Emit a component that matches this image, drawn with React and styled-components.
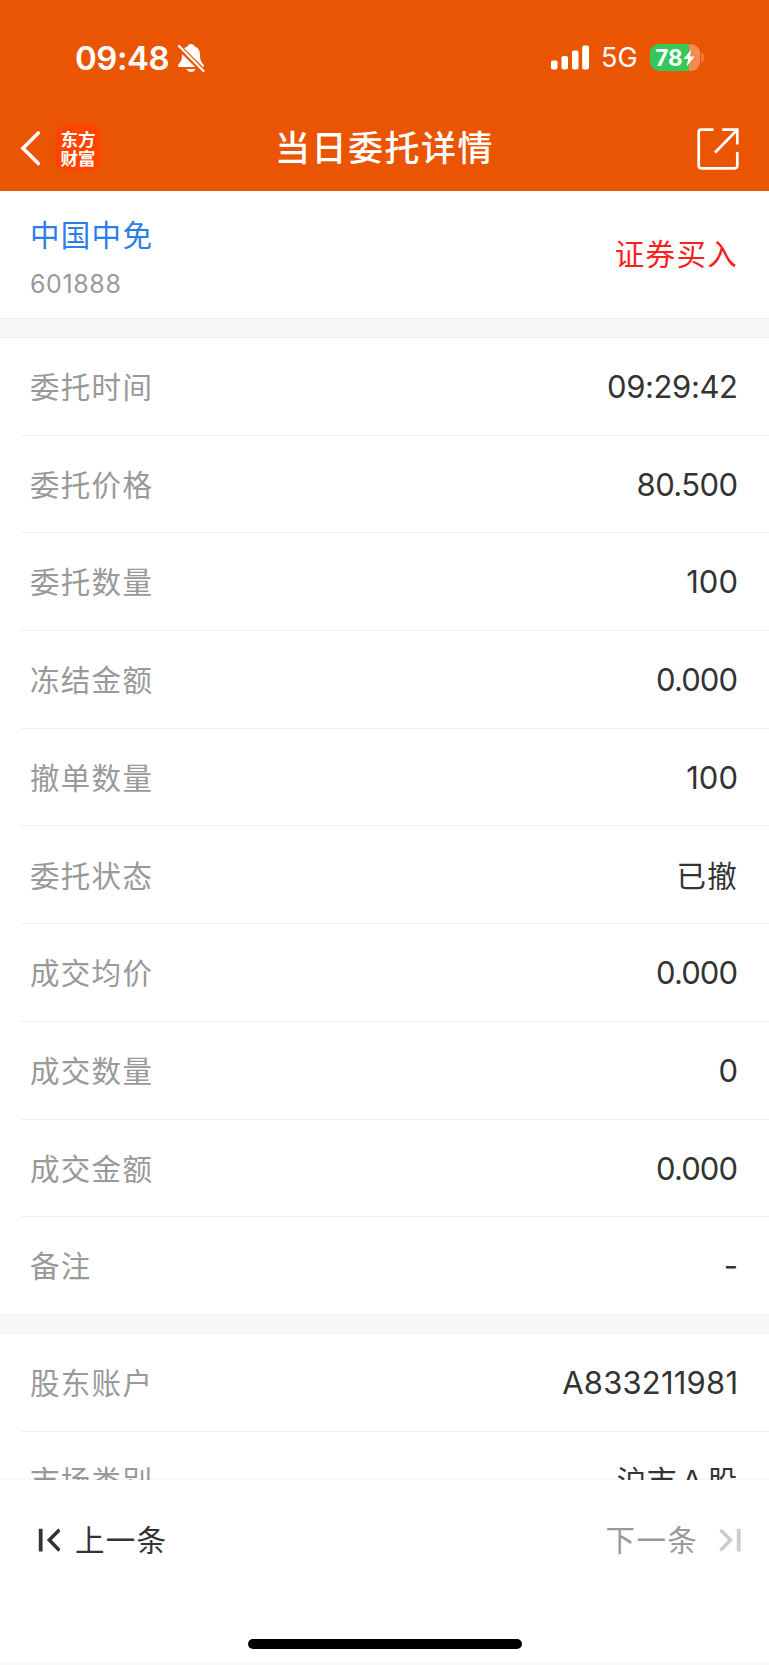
import React from "react";
import styled, { createGlobalStyle } from "styled-components";

const GlobalStyle = createGlobalStyle`
  * {
    box-sizing: border-box;
  }

  body {
    margin: 0;
    background-color: #fff;
    font-family: Inter, "Noto Sans CJK SC", sans-serif;
  }
`;

const Page = styled.div`
  display: flex;
  flex-direction: column;
  width: 769px;
  height: 1665px;
  overflow: hidden;
  background-color: #fff;
`;

const Header = styled.header`
  flex: none;
  height: 191px;
  background-color: #ea5504;
  color: #fff;
`;

const StatusBar = styled.div`
  display: flex;
  align-items: center;
  justify-content: space-between;
  height: 103px;
  padding: 12px 65px 0 75px;
`;

const StatusGroup = styled.div`
  display: flex;
  align-items: center;
`;

const Time = styled.span`
  width: 102px;
  font-size: 33px;
  font-weight: 600;
  line-height: 40px;
  letter-spacing: -0.5px;
`;

const Network = styled.span`
  width: 49px;
  margin-left: 12px;
  font-size: 27px;
  line-height: 40px;
`;

const Battery = styled.div`
  display: flex;
  align-items: center;
  justify-content: center;
  width: 50px;
  height: 27px;
  border-radius: 9px;
  background: linear-gradient(to right, #34c759 39px, #f38c54 39px);
  font-size: 22.5px;
  font-weight: 700;
  line-height: 27px;
`;

const BatteryCap = styled.div`
  width: 3px;
  height: 9px;
  margin-left: 1px;
  border-radius: 0 4px 4px 0;
  background-color: #f07a3c;
`;

const NavBar = styled.div`
  display: grid;
  grid-template-columns: 200px 1fr 200px;
  align-items: center;
  height: 88px;
  padding: 2px 30px 0 20px;
`;

const NavLeft = styled.div`
  display: flex;
  align-items: center;
  gap: 13px;
`;

const NavRight = styled.div`
  display: flex;
  justify-content: flex-end;
  padding-top: 2px;
`;

const AppLogo = styled.div`
  display: flex;
  align-items: center;
  justify-content: center;
  width: 46px;
  height: 46px;
  border-radius: 10px;
  background-color: #ff4400;
  font-family: "Noto Sans CJK SC", sans-serif;
  font-size: 17.5px;
  font-weight: 700;
  line-height: 19px;
  white-space: pre-line;
`;

const Title = styled.h1`
  margin: 0;
  padding-left: 10px;
  text-align: center;
  font-size: 35px;
  font-weight: 500;
  line-height: 50px;
  letter-spacing: 1.5px;
  white-space: nowrap;
`;

const Stock = styled.section`
  display: flex;
  flex: none;
  align-items: center;
  justify-content: space-between;
  height: 127px;
  padding: 0 31px 0 30px;
`;

const StockInfo = styled.div`
  padding-top: 7px;
`;

const StockName = styled.div`
  color: #2b7de9;
  font-size: 29.5px;
  line-height: 44px;
  letter-spacing: 1.3px;
`;

const StockCode = styled.div`
  margin-top: 7px;
  color: #999;
  font-size: 25px;
  line-height: 40px;
  letter-spacing: 0.6px;
`;

const Direction = styled.div`
  padding-bottom: 2px;
  color: #f6211f;
  font-size: 29.5px;
  line-height: 44px;
  letter-spacing: 1.3px;
`;

const Divider = styled.div`
  flex: none;
  height: 20px;
  border-top: 1px solid #eeeeef;
  border-bottom: 1px solid #eeeeef;
  background-color: #f6f7f9;
`;

const List = styled.section`
  flex: none;
  height: ${({ $height }) => $height}px;
  padding-left: 20px;
  overflow: hidden;
`;

const Row = styled.div`
  display: flex;
  align-items: center;
  justify-content: space-between;
  height: 97.7px;
  padding: 1.5px 31px 0 10px;
  border-bottom: 1px solid ${({ $last }) => ($last ? "transparent" : "#f2f2f3")};
`;

const Label = styled.span`
  color: #999;
  font-size: 29.5px;
  line-height: 44px;
  letter-spacing: 1.3px;
`;

const Value = styled.span`
  margin-right: ${({ $spacing = 0 }) => -$spacing}px;
  color: #333;
  font-size: 31px;
  line-height: 44px;
  letter-spacing: ${({ $spacing = 0 }) => $spacing}px;
`;

const TextValue = styled(Value)`
  margin-right: 0;
  font-size: 29.5px;
  letter-spacing: ${({ $spacing = 1.2 }) => $spacing}px;
`;

/* the see-through top border lets the clipped row show under it */
const Footer = styled.footer`
  display: flex;
  flex: 1;
  flex-direction: column;
  align-items: center;
  justify-content: space-between;
  margin-top: -2px;
  border-top: 2px solid rgba(0, 0, 0, 0.03);
  border-bottom: 3px solid #f8f8f9;
  background-color: #fff;
  background-clip: padding-box;
`;

const Pager = styled.div`
  display: flex;
  justify-content: space-between;
  width: 100%;
  padding: 38px 27px 0 36px;
`;

const PagerButton = styled.div`
  display: flex;
  align-items: center;
  gap: ${({ $gap }) => $gap}px;
  color: ${({ $disabled }) => ($disabled ? "#999" : "#333")};
  font-size: 29.5px;
  line-height: 44px;
  letter-spacing: 1.3px;
`;

const HomeIndicator = styled.div`
  width: 274px;
  height: 10px;
  margin-bottom: 13px;
  border-radius: 5px;
  background-color: #000;
`;

const orderRows = [
  { label: "委托时间", value: "09:29:42", spacing: -0.4 },
  { label: "委托价格", value: "80.500", spacing: -0.6 },
  { label: "委托数量", value: "100" },
  { label: "冻结金额", value: "0.000", spacing: -0.9 },
  { label: "撤单数量", value: "100" },
  { label: "委托状态", value: "已撤", text: true },
  { label: "成交均价", value: "0.000", spacing: -0.9 },
  { label: "成交数量", value: "0" },
  { label: "成交金额", value: "0.000", spacing: -0.9 },
  { label: "备注", value: "-" },
];

const accountRows = [
  { label: "股东账户", value: "A833211981", spacing: 0.2 },
  { label: "市场类别", value: "沪市Ａ股", text: true, spacing: 0.8 },
];

const MutedBell = () => (
  <svg width="28" height="30" viewBox="0 0 28 30">
    <path
      d="M14 1c-2 0-3 1-3.400 2.300C6.500 4.800 5 8 5 12c0 5-1 6.500-3.500 9.300C.3 22.700 1 24 2.500 24h23c1.500 0 2-1.300 1-2.500C24 18.500 23 17 23 12c0-4-1.500-7.200-5.600-8.700C17 2 16 1 14 1zM9.500 26h9c-.8 2-2.500 3-4.500 3s-3.700-1-4.500-3z"
      fill="#fff"
    />
    <path d="M1 3l26 26" stroke="#ea5504" strokeWidth="5.500" />
    <path d="M2 3l24.500 25" stroke="#fff" strokeWidth="2.200" strokeLinecap="round" />
  </svg>
);

const Signal = () => (
  <svg width="38" height="25" viewBox="0 0 38 25" fill="#fff">
    <rect x="0" y="15.500" width="6.500" height="9" rx="1.800" />
    <rect x="10.500" y="11" width="6.500" height="13.500" rx="1.800" />
    <rect x="21" y="5.500" width="6.500" height="19" rx="1.800" />
    <rect x="31.200" y="0.500" width="6.800" height="24" rx="1.800" />
  </svg>
);

const Bolt = () => (
  <svg width="12" height="18" viewBox="0 0 12 18">
    <path d="M8.200.5L.5 10h4.700L3.600 17.500 11.600 7.500H6.900z" fill="#fff" />
  </svg>
);

const BackIcon = () => (
  <svg width="22" height="36" viewBox="0 0 22 36" fill="none">
    <path
      d="M18.300 3L3 18.200l15.300 15.300"
      stroke="#fff"
      strokeWidth="3.600"
      strokeLinecap="round"
      strokeLinejoin="miter"
    />
  </svg>
);

const ShareIcon = () => (
  <svg width="42" height="42" viewBox="0 0 42 42" fill="none" stroke="#fff" strokeWidth="2.700">
    <path d="M16.500 1.700H4.200a2.500 2.500 0 0 0-2.500 2.500v33.600a2.500 2.500 0 0 0 2.500 2.500h33.600a2.500 2.500 0 0 0 2.500-2.500V24" />
    <path d="M25.200 1.700h15.100v14.800" />
    <path d="M39.500 2.500L18 24.500" />
  </svg>
);

const FirstIcon = () => (
  <svg width="24" height="24" viewBox="0 0 24 24" fill="none" stroke="#333">
    <path d="M4.700.8v22.700" strokeWidth="3.800" />
    <path d="M23.500 1.700L13.300 12.100l10.200 10.300" strokeWidth="3.500" />
  </svg>
);

const LastIcon = () => (
  <svg width="24" height="24" viewBox="0 0 24 24" fill="none" stroke="#ccc">
    <path d="M20.700.8v22.700" strokeWidth="3.800" />
    <path d="M2.400 1.700l10.200 10.400L2.400 22.400" strokeWidth="3.500" />
  </svg>
);

const renderRow = (row, index, rows) => (
  <Row key={row.label} $last={index === rows.length - 1}>
    <Label>{row.label}</Label>
    {row.text ? (
      <TextValue $spacing={row.spacing}>{row.value}</TextValue>
    ) : (
      <Value $spacing={row.spacing}>{row.value}</Value>
    )}
  </Row>
);

const App = () => {
  return (
    <Page>
      <GlobalStyle />
      <Header>
        <StatusBar>
          <StatusGroup>
            <Time>09:48</Time>
            <MutedBell />
          </StatusGroup>
          <StatusGroup>
            <Signal />
            <Network>5G</Network>
            <Battery>
              78
              <Bolt />
            </Battery>
            <BatteryCap />
          </StatusGroup>
        </StatusBar>
        <NavBar>
          <NavLeft>
            <BackIcon />
            <AppLogo>{"东方\n财富"}</AppLogo>
          </NavLeft>
          <Title>当日委托详情</Title>
          <NavRight>
            <ShareIcon />
          </NavRight>
        </NavBar>
      </Header>

      <Stock>
        <StockInfo>
          <StockName>中国中免</StockName>
          <StockCode>601888</StockCode>
        </StockInfo>
        <Direction>证券买入</Direction>
      </Stock>

      <Divider />
      <List $height={976}>{orderRows.map(renderRow)}</List>
      <Divider />
      <List $height={146}>{accountRows.map(renderRow)}</List>

      <Footer>
        <Pager>
          <PagerButton $gap={15}>
            <FirstIcon />
            上一条
          </PagerButton>
          <PagerButton $gap={20} $disabled>
            下一条
            <LastIcon />
          </PagerButton>
        </Pager>
        <HomeIndicator />
      </Footer>
    </Page>
  );
};

export default App;
